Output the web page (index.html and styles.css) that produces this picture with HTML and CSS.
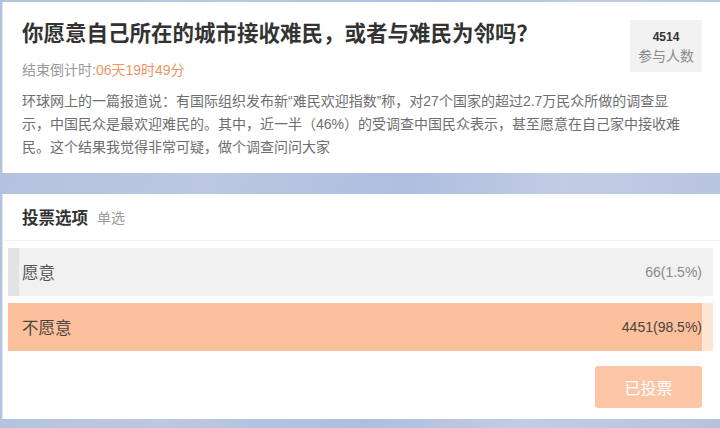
FILE: index.html
```html
<!DOCTYPE html>
<html lang="zh-CN">
<head>
<meta charset="utf-8">
<title>投票</title>
<link rel="stylesheet" href="styles.css">
</head>
<body>
<div class="page">
  <section class="card intro">
    <div class="intro-head">
      <div class="titles">
        <h1 class="title">你愿意自己所在的城市接收难民，或者与难民为邻吗？</h1>
        <p class="countdown">结束倒计时:<span class="time">06天19时49分</span></p>
      </div>
      <div class="stats">
        <div class="stats-num">4514</div>
        <div class="stats-label">参与人数</div>
      </div>
    </div>
    <p class="desc">环球网上的一篇报道说：有国际组织发布新“难民欢迎指数”称，对27个国家的超过2.7万民众所做的调查显<br>示，中国民众是最欢迎难民的。其中，近一半（46%）的受调查中国民众表示，甚至愿意在自己家中接收难<br>民。这个结果我觉得非常可疑，做个调查问问大家</p>
  </section>

  <section class="card vote">
    <div class="vote-head">
      <span class="vote-title">投票选项</span>
      <span class="vote-sub">单选</span>
    </div>
    <div class="options">
      <div class="option option-gray">
        <div class="fill" style="width:1.5%"></div>
        <span class="label">愿意</span>
        <span class="count">66(1.5%)</span>
      </div>
      <div class="option option-orange">
        <div class="fill" style="width:98.5%"></div>
        <span class="label">不愿意</span>
        <span class="count">4451(98.5%)</span>
      </div>
    </div>
    <div class="actions">
      <button class="voted" type="button">已投票</button>
    </div>
  </section>
</div>
</body>
</html>
```

FILE: styles.css
```css
* {
  box-sizing: border-box;
}

html, body {
  margin: 0;
  padding: 0;
}

body {
  width: 720px;
  height: 428px;
  overflow: hidden;
  font-family: "Liberation Sans", "Noto Sans CJK SC", sans-serif;
  background: linear-gradient(100deg, #b3c1df 0%, #bcc8e2 30%, #aebedf 55%, #c2cce4 75%, #b6c3e0 100%);
}

.page {
  padding: 2px 0 0 2px;
}

.card {
  background: #ffffff;
  border-left: 1px solid #dfe4ee;
}

.intro {
  height: 171px;
  padding: 18px 18px 14px 19px;
}

.intro-head {
  display: flex;
  justify-content: space-between;
  align-items: flex-start;
}

.title {
  margin: 0;
  font-size: 21.5px;
  line-height: 28px;
  font-weight: bold;
  color: #333333;
}

.countdown {
  margin: 12px 0 0;
  font-size: 14px;
  line-height: 20px;
  color: #999999;
}

.time {
  color: #f0935f;
}

.stats {
  width: 72px;
  height: 52px;
  padding-top: 9px;
  background: #f2f2f3;
  text-align: center;
  flex-shrink: 0;
}

.stats-num {
  font-size: 12px;
  line-height: 16px;
  font-weight: bold;
  color: #333333;
}

.stats-label {
  font-size: 14px;
  line-height: 22px;
  color: #8a8a8a;
}

.desc {
  margin: 10px 0 0;
  font-size: 14px;
  line-height: 23px;
  color: #6e6e6e;
  white-space: nowrap;
}

.vote {
  margin-top: 21px;
  height: 225px;
  padding: 0 0 11px 5px;
}

.vote-head {
  height: 47px;
  display: flex;
  align-items: center;
  gap: 9px;
  margin-left: -5px;
  padding-left: 19px;
  border-bottom: 1px solid #f1f1f1;
}

.vote-title {
  font-size: 16.5px;
  font-weight: bold;
  color: #333333;
}

.vote-sub {
  font-size: 14px;
  color: #999999;
}

.options {
  display: flex;
  flex-direction: column;
  gap: 7px;
  padding: 7px 7px 0 0;
}

.option {
  position: relative;
  height: 48px;
  display: flex;
  align-items: center;
  justify-content: space-between;
  padding: 0 11px 0 14px;
}

.fill {
  position: absolute;
  left: 0;
  top: 0;
  bottom: 0;
}

.option-gray {
  background: #f1f1f2;
}

.option-gray .fill {
  background: #e3e3e5;
}

.option-orange {
  background: #fde6d1;
}

.option-orange .fill {
  background: #fdc09c;
}

.label {
  position: relative;
  font-size: 16.5px;
  color: #555555;
}

.option-orange .label {
  color: #4a4440;
}

.count {
  position: relative;
  font-size: 14px;
  color: #8a8a8a;
}

.option-orange .count {
  color: #4a4440;
}

.actions {
  display: flex;
  justify-content: flex-end;
  padding: 15px 18px 0 0;
}

.voted {
  width: 107px;
  height: 42px;
  border: none;
  border-radius: 3px;
  background: #fcc6a6;
  color: #ffffff;
  font-family: "Liberation Sans", "Noto Sans CJK SC", sans-serif;
  font-size: 16px;
  padding: 0;
}
```
